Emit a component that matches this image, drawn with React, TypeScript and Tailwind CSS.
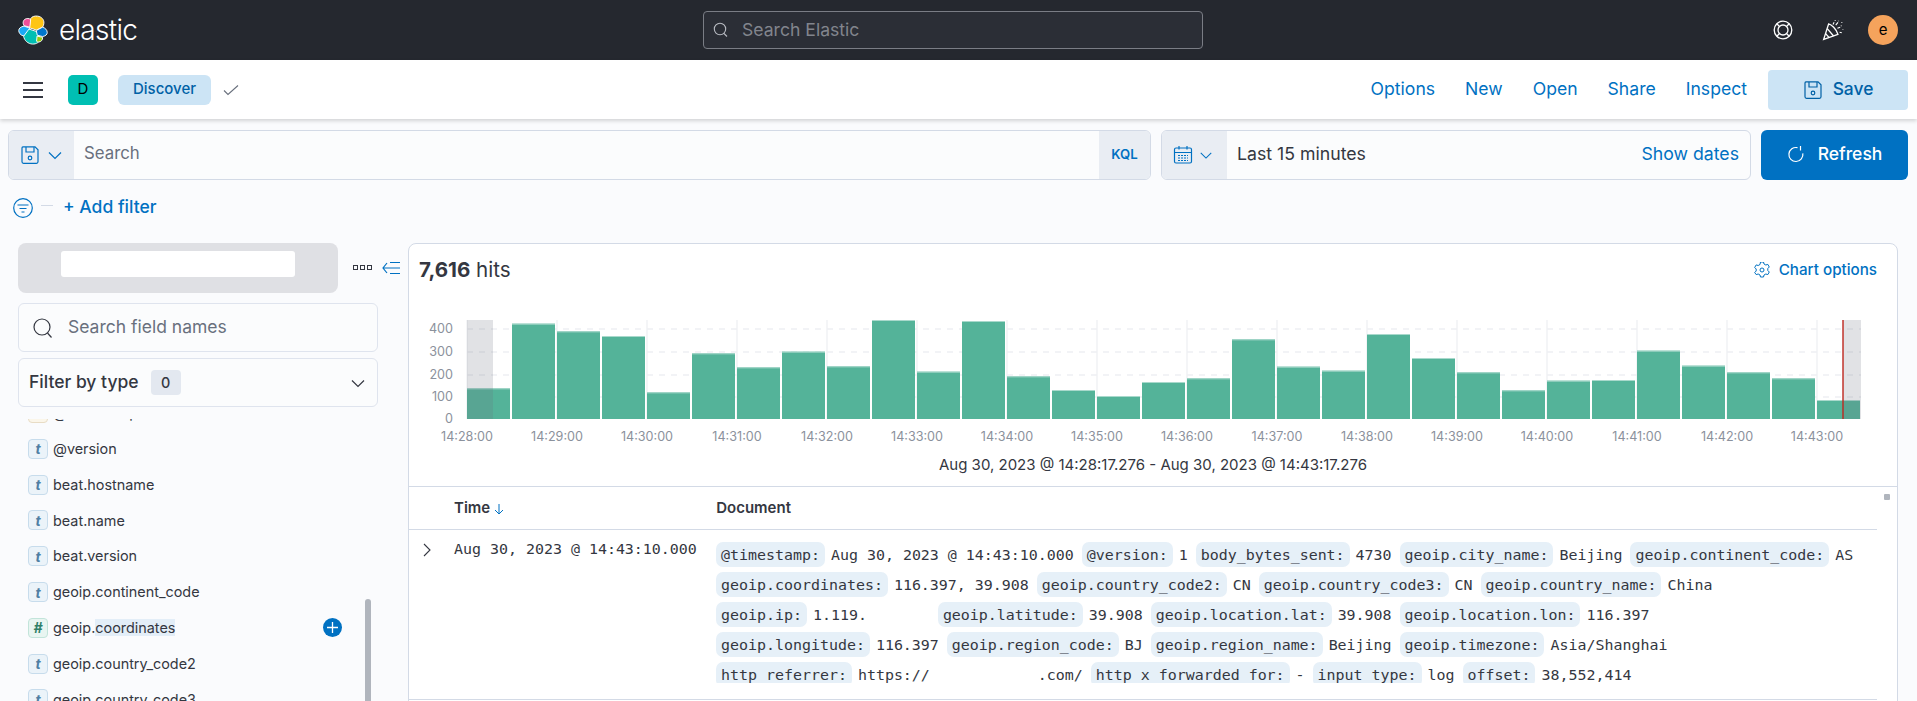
const INTER = "font-['Inter',sans-serif]";

const bars = [
  445, 251, 274, 288, 457, 340, 382, 335, 379, 240, 395, 243, 409, 450, 468, 426,
  415, 298, 380, 392, 282, 354, 397, 451, 422, 420, 332, 377, 397, 415, 480,
];

const fields = [
  { name: '@version', type: 't' },
  { name: 'beat.hostname', type: 't' },
  { name: 'beat.name', type: 't' },
  { name: 'beat.version', type: 't' },
  { name: 'geoip.continent_code', type: 't' },
  { name: 'geoip.coordinates', type: '#' },
  { name: 'geoip.country_code2', type: 't' },
  { name: 'geoip.country_code3', type: 't' },
];

const docRows: [string, string][][] = [
  [
    ['@timestamp:', 'Aug 30, 2023 @ 14:43:10.000'],
    ['@version:', '1'],
    ['body_bytes_sent:', '4730'],
    ['geoip.city_name:', 'Beijing'],
    ['geoip.continent_code:', 'AS'],
  ],
  [
    ['geoip.coordinates:', '116.397, 39.908'],
    ['geoip.country_code2:', 'CN'],
    ['geoip.country_code3:', 'CN'],
    ['geoip.country_name:', 'China'],
  ],
  [
    ['geoip.ip:', '1.119.       '],
    ['geoip.latitude:', '39.908'],
    ['geoip.location.lat:', '39.908'],
    ['geoip.location.lon:', '116.397'],
  ],
  [
    ['geoip.longitude:', '116.397'],
    ['geoip.region_code:', 'BJ'],
    ['geoip.region_name:', 'Beijing'],
    ['geoip.timezone:', 'Asia/Shanghai'],
  ],
  [
    ['http_referrer:', 'https://            .com/'],
    ['http_x_forwarded_for:', '-'],
    ['input_type:', 'log'],
    ['offset:', '38,552,414'],
  ],
];

const ElasticLogo = () => (
  <svg width="30" height="30" viewBox="0 0 32 32">
    <path d="M12 13.5 13.5 3.8C15 1.5 18 .8 21 1.2c4 .6 7 3.6 6.6 7.6-.1 1.5-.6 3-1.4 4.3L19.5 16z" fill="#fec514" stroke="#fff" strokeWidth="1" />
    <path d="M12.6 13 6.6 11.5C5 9.5 5 6 7.5 4.5c1.8-1.1 4.2-1 6 .2z" fill="#f04e98" stroke="#fff" strokeWidth="1" />
    <path d="M6.4 11.8 12.5 14l-1.5 7.2-5.6 1C2.3 21.3.8 18.8.8 16.5c0-2.1 2-4 5.6-4.7z" fill="#1ba9f5" stroke="#fff" strokeWidth="1" />
    <path d="M11.7 15 19.5 17.5l4.8 7.5C23 29 19.5 31.2 15.5 31c-5-.3-8.7-3.7-9.5-8.3z" fill="#00bfb3" stroke="#fff" strokeWidth="1" />
    <path d="M26.2 13c2.8.8 5 3 5 5.7 0 2-1.5 3.6-5 4.3l-5.7-1.5-1-5z" fill="#07c" stroke="#fff" strokeWidth="1" />
    <path d="M20.3 22.5l5.9 1.3c.3 2.7-1.5 5-4.2 5-1 0-1.6-.4-2.2-.8z" fill="#93c90e" stroke="#fff" strokeWidth="1" />
  </svg>
);

const SaveIcon = ({ className = '' }: { className?: string }) => (
  <svg width="20" height="20" viewBox="0 0 20 20" fill="none" stroke="currentColor" strokeWidth="1.2" className={className}>
    <path d="M3 1.8h12l3 3v12a1.5 1.5 0 0 1-1.5 1.5h-13A1.5 1.5 0 0 1 2 16.8V3a1.2 1.2 0 0 1 1-1.2z" />
    <path d="M6 2v5h8V2" />
    <circle cx="10" cy="13" r="1.8" />
  </svg>
);

const Chevron = ({ size = 16, className = '' }: { size?: number; className?: string }) => (
  <svg width={size} height={size} viewBox="0 0 16 16" fill="none" stroke="currentColor" strokeWidth="1.2" className={className}>
    <path d="M2 5.5l6 6 6-6" />
  </svg>
);

const HistogramChart = () => {
  const left = 58;
  const ticks = Array.from({ length: 16 }, (_, i) => i);
  return (
    <svg width="1468" height="130" viewBox="0 0 1468 130" className="block">
      {ticks.map((i) => (
        <line key={i} x1={left + i * 90} x2={left + i * 90} y1={0} y2={99} stroke="#f1f2f5" strokeWidth="1.5" />
      ))}
      {[9, 32, 55, 77].map((y) => (
        <line key={y} x1={left} x2={1452} y1={y} y2={y} stroke="#eef0f3" strokeWidth="1.5" strokeDasharray="6 6" />
      ))}
      {bars.map((b, i) => {
        const y = b / 3 - 80;
        return (
          <g key={i}>
            <rect x={left + i * 45} y={y} width={43} height={99 - y} fill="#54b399" />
            <rect x={left + i * 45} y={y} width={43} height={1} fill="#a9d9cc" />
          </g>
        );
      })}
      <rect x={left} y={0} width={26} height={99} fill="#69707d" fillOpacity="0.2" />
      <rect x={1434} y={0} width={18} height={99} fill="#69707d" fillOpacity="0.2" />
      <rect x={1433} y={0} width={2} height={99} fill="#bd271e" fillOpacity="0.7" />
      {[
        ['400', 9],
        ['300', 32],
        ['200', 55],
        ['100', 77],
        ['0', 99],
      ].map(([t, y]) => (
        <text key={t} x={44} y={Number(y) + 4} textAnchor="end" fontSize="12.6" fontFamily="Inter" fill="#8b919c">
          {t}
        </text>
      ))}
      {ticks.map((i) => (
        <text key={i} x={left + i * 90} y={121} textAnchor="middle" fontSize="12.6" fontFamily="Inter" fill="#8b919c">
          {`14:${28 + i}:00`}
        </text>
      ))}
    </svg>
  );
};

export default function App() {
  return (
    <div className={`${INTER} h-[701px] w-[1917px] overflow-hidden bg-[#fafbfd] text-[14.4px] text-[#343741]`}>
      {/* top dark bar */}
      <header className="relative flex h-[60px] items-center bg-[#25282f] pl-[18px] pr-[19px]">
        <ElasticLogo />
        <span className="ml-[11px] text-[28px] font-light tracking-tight text-white">elastic</span>
        <div className="absolute left-[703px] top-[11px] flex h-[38px] w-[500px] items-center gap-[13px] rounded-[4px] border border-[#7a7d85] bg-[#2b2e36] px-[9px]">
          <svg width="16" height="16" viewBox="0 0 16 16" fill="none" stroke="#b8bbc2" strokeWidth="1.1">
            <circle cx="7" cy="7" r="5.7" />
            <path d="M11 11.5l3 3" />
          </svg>
          <span className="text-[17.6px] text-[#82858d]">Search Elastic</span>
        </div>
        <div className="ml-auto flex items-center">
          <svg width="20" height="20" viewBox="0 0 20 20" fill="none" stroke="#fff" strokeWidth="1.3">
            <circle cx="10" cy="10" r="8.8" />
            <circle cx="10" cy="10" r="5" />
            <path d="M3.8 3.8l2.7 2.7M16.2 3.8l-2.7 2.7M3.8 16.2l2.7-2.7M16.2 16.2l-2.7-2.7" />
          </svg>
          <svg width="22" height="22" viewBox="0 0 20 20" fill="none" stroke="#fff" strokeWidth="1.2" className="ml-[29px]">
            <path d="M1.5 18.5 6 4.5c2.5.5 7 4.5 8.5 9.5z" />
            <path d="M4.8 8.8l5.7 6.7M3.3 13.3l3.3 3.7" />
            <path d="M10 5l1-2M14 8.5l2.5-1M12.5 5.5l2-2.5M16 12l2 .5" strokeWidth="1" />
            <path d="M15 1.5v.6M18 3v.6M17.5 6v.6M19 9v.6M12 1v.6" strokeWidth="1.1" />
          </svg>
          <div className="ml-[24px] flex h-[30px] w-[30px] items-center justify-center rounded-full bg-[#f5a35c] text-[15px] text-black">
            e
          </div>
        </div>
      </header>

      {/* app bar */}
      <div className="relative z-10 flex h-[59px] items-center bg-white pl-[23px] pr-[9px] shadow-[0_2px_4px_rgba(0,0,0,0.16)]">
        <div className="flex w-[20px] flex-col gap-[5px]">
          <span className="h-[2px] bg-[#343741]" />
          <span className="h-[2px] bg-[#343741]" />
          <span className="h-[2px] bg-[#343741]" />
        </div>
        <div className="ml-[25px] flex h-[30px] w-[30px] items-center justify-center rounded-[5px] bg-[#00bfb3] text-[15px] text-black">
          D
        </div>
        <div className="ml-[20px] flex h-[30px] w-[93px] items-center justify-center rounded-[6px] bg-[#cce4f5] text-[15px] font-medium text-[#0061a6]">
          Discover
        </div>
        <svg width="16" height="16" viewBox="0 0 16 16" fill="none" stroke="#69707d" strokeWidth="1.1" className="ml-[12px]">
          <path d="M1 8.5l4 4 10-9" />
        </svg>
        <nav className="ml-auto flex items-center text-[17.6px] text-[#0071c2]">
          <span>Options</span>
          <span className="ml-[30px]">New</span>
          <span className="ml-[30px]">Open</span>
          <span className="ml-[30px]">Share</span>
          <span className="ml-[30px]">Inspect</span>
        </nav>
        <button className="ml-[21px] flex h-[40px] w-[140px] items-center justify-center gap-[10px] rounded-[4px] bg-[#cce4f5] text-[17.4px] font-medium text-[#0061a6]">
          <SaveIcon />
          Save
        </button>
      </div>

      {/* query row */}
      <div className="mt-[11px] flex h-[50px] gap-[10px] pl-[8px] pr-[9px]">
        <div className="flex w-[1143px] overflow-hidden rounded-[6px] border border-[#d3dae6] bg-[#fbfcfd]">
          <div className="flex w-[65px] items-center gap-[7px] bg-[#e9edf3] pl-[11px] text-[#0071c2]">
            <SaveIcon />
            <Chevron />
          </div>
          <span className="mb-[2px] ml-[10px] self-center text-[16.8px] text-[#69707d]">Search</span>
          <span className="ml-auto flex w-[51px] items-center justify-center bg-[#e9edf3] text-[13.2px] font-semibold text-[#0071c2]">KQL</span>
        </div>
        <div className="flex w-[590px] overflow-hidden rounded-[6px] border border-[#d3dae6] bg-[#fbfcfd]">
          <div className="flex w-[65px] items-center gap-[6px] bg-[#e9edf3] pl-[11px] text-[#0071c2]">
            <svg width="20" height="20" viewBox="0 0 20 20" fill="none" stroke="currentColor" strokeWidth="1.2">
              <rect x="1.5" y="3" width="17" height="15" rx="1.5" />
              <path d="M1.5 7.5h17M6 1v3.5M14 1v3.5" />
              <path d="M5 10.5h10M5 13h10M5 15.5h10" strokeDasharray="2 1" />
            </svg>
            <Chevron size={14} />
          </div>
          <span className="mb-[2px] ml-[10px] self-center text-[17.7px]">Last 15 minutes</span>
          <span className="mb-[2px] ml-auto self-center pr-[11px] text-[17.7px] text-[#0071c2]">Show dates</span>
        </div>
        <button className="flex flex-1 items-center justify-center gap-[13px] rounded-[6px] bg-[#0071c2] pb-[2px] text-[17.5px] font-medium text-white">
          <svg width="18" height="18" viewBox="0 0 18 18" fill="none" stroke="#fff" strokeWidth="1.2">
            <path d="M10.5 2.7a7 7 0 1 0 5.3 5.6" />
            <path d="M13.5 1v4.5" />
          </svg>
          Refresh
        </button>
      </div>

      {/* filter row */}
      <div className="mt-[16px] flex h-[24px] items-center pl-[13px] text-[#0071c2]">
        <svg width="20" height="20" viewBox="0 0 20 20" fill="none" stroke="currentColor" strokeWidth="1.2">
          <circle cx="10" cy="10" r="9.3" />
          <path d="M4.5 7h11M6.5 10.5h7M8.5 14h3" />
        </svg>
        <span className="ml-[8px] h-[1px] w-[12px] -translate-y-[3px] bg-[#d3dae6]" />
        <span className="mb-[2px] ml-[10px] text-[17.5px] font-medium">+ Add filter</span>
      </div>

      {/* body */}
      <div className="mt-[23px] flex h-[458px] overflow-hidden">
        {/* sidebar */}
        <aside className="relative w-[408px] shrink-0 overflow-hidden pl-[18px]">
          <div className="flex items-start">
            <div className="flex h-[50px] w-[320px] justify-center rounded-[8px] bg-[#dfe0e4] pt-[8px]">
              <div className="h-[26px] w-[234px] rounded-[3px] bg-white" />
            </div>
            <div className="ml-[15px] mt-[22px] flex gap-[2px]">
              <span className="h-[5px] w-[5px] border border-[#343741]" />
              <span className="h-[5px] w-[5px] border border-[#343741]" />
              <span className="h-[5px] w-[5px] border border-[#343741]" />
            </div>
            <svg width="19" height="14" viewBox="0 0 19 14" fill="none" stroke="#0071c2" strokeWidth="1.2" className="ml-[10px] mt-[18px]">
              <path d="M5 2 1 7l4 5M1 7h17M8 1.5h10M8 12.5h10" />
            </svg>
          </div>
          <div className="mt-[10px] flex h-[49px] w-[360px] items-center rounded-[6px] border border-[#dfe4ee] bg-[#fbfcfd] pl-[14px]">
            <svg width="20" height="20" viewBox="0 0 20 20" fill="none" stroke="#343741" strokeWidth="1.2">
              <circle cx="9" cy="9" r="8" />
              <path d="M14.5 15l4 4.5" />
            </svg>
            <span className="ml-[15px] text-[17.5px] text-[#69707d]">Search field names</span>
          </div>
          <div className="mt-[6px] flex h-[49px] w-[360px] items-center rounded-[6px] border border-[#dfe4ee] bg-[#fbfcfd] pl-[10px] pr-[11px]">
            <span className="text-[17.5px] font-medium">Filter by type</span>
            <span className="ml-[12px] flex h-[25px] w-[30px] items-center justify-center rounded-[4px] bg-[#e3e8f0] text-[14.4px] font-medium">0</span>
            <Chevron className="ml-auto" />
          </div>
          <div className="relative mt-[12px] h-[289px] overflow-hidden pl-[10px]">
            <div className="-mt-[24px] flex h-[36px] items-center">
              <span className="h-[20px] w-[20px] rounded-[4px] border border-[#e8dcc5] bg-[#fbf6ea]" />
              <span className="ml-[5px] text-[14.4px] text-[#343741]">@timestamp</span>
            </div>
            {fields.map((f) => (
              <div key={f.name} className="flex h-[35.8px] items-center">
                <span
                  className={
                    f.type === 't'
                      ? 'flex h-[20px] w-[20px] items-center justify-center rounded-[4px] border border-[#c7dcec] bg-[#ebf3f9] text-[14px] font-bold italic text-[#4f7fa3]'
                      : 'flex h-[20px] w-[20px] items-center justify-center rounded-[4px] border border-[#c2e4da] bg-[#e8f5f1] text-[14px] font-bold italic text-[#2f7f68]'
                  }
                >
                  {f.type}
                </span>
                <span className="ml-[5px] text-[14.4px] text-[#343741]">
                  {f.name === 'geoip.coordinates' ? (
                    <>
                      geoip.<span className="bg-[#e3eef8]">coordinates</span>
                    </>
                  ) : (
                    f.name
                  )}
                </span>
                {f.name === 'geoip.coordinates' && (
                  <span className="absolute left-[305px] flex h-[19px] w-[19px] items-center justify-center rounded-full bg-[#0071c2]">
                    <svg width="11" height="11" viewBox="0 0 11 11" stroke="#fff" strokeWidth="1.3">
                      <path d="M5.5 0v11M0 5.5h11" />
                    </svg>
                  </span>
                )}
              </div>
            ))}
            <span className="absolute left-[347px] top-[180px] h-[120px] w-[6px] rounded-full bg-[#b0b5bd]" />
          </div>
        </aside>

        {/* main panel */}
        <main className="relative h-[470px] w-[1490px] shrink-0 rounded-tl-[8px] rounded-tr-[8px] border border-[#d3dae6] bg-white">
          <div className="flex h-[243px] flex-col border-b border-[#d3dae6]">
            <div className="flex h-[52px] items-center pl-[10px] pr-[20px]">
              <span className="text-[20.6px]">
                <span className="font-bold">7,616</span> hits
              </span>
              <span className="ml-auto flex items-center gap-[9px] text-[15.2px] font-medium text-[#0071c2]">
                <svg width="16" height="16" viewBox="0 0 16 16" fill="none" stroke="currentColor" strokeWidth="1">
                  <path d="M6.5 1h3l.5 2 1.8 1 2-.6 1.5 2.6-1.5 1.5v2l1.5 1.5-1.5 2.6-2-.6-1.8 1-.5 2h-3l-.5-2-1.8-1-2 .6L.7 11.5 2.2 10V8L.7 6.5l1.5-2.6 2 .6 1.8-1z" transform="translate(0 -1)" />
                  <circle cx="8" cy="8" r="2" />
                </svg>
                Chart options
              </span>
            </div>
            <div className="mt-[24px]">
              <HistogramChart />
            </div>
            <div className="mt-[4px] text-center text-[15px]">
              Aug 30, 2023 @ 14:28:17.276 - Aug 30, 2023 @ 14:43:17.276
            </div>
          </div>

          <div className="flex h-[43px] w-[1468px] items-center border-b border-[#d3dae6] pt-[1px] text-[15px] font-semibold">
            <span className="ml-[45px] flex items-center gap-[3px]">
              Time
              <svg width="12" height="12" viewBox="0 0 12 12" fill="none" stroke="#0071c2" strokeWidth="1">
                <path d="M6 1v10M2 7l4 4 4-4" />
              </svg>
            </span>
            <span className="ml-[211px]">Document</span>
          </div>

          <div className="flex h-[170px] w-[1468px] border-b border-[#d3dae6]">
            <svg width="10" height="14" viewBox="0 0 10 14" fill="none" stroke="#343741" strokeWidth="1.1" className="ml-[13px] mt-[13px]">
              <path d="M2 1l6 6-6 6" />
            </svg>
            <div className="ml-[22px] mt-[9px] w-[262px] font-['DejaVu_Sans_Mono',monospace] text-[14.95px] leading-[20px]">
              Aug 30, 2023 @ 14:43:10.000
            </div>
            <div className="mt-[12px] h-[141px] flex-1 overflow-hidden font-['DejaVu_Sans_Mono',monospace] text-[14.95px]">
              {docRows.map((row, r) => (
                <div key={r} className="flex h-[30px] items-start">
                  {row.map(([k, v]) => (
                    <div key={k} className="mr-[8px] flex items-center">
                      <span className="flex h-[25px] items-center rounded-[7px] bg-[#e6f0f8] px-[5px] pt-[1px]">{k}</span>
                      <span className="ml-[6px] whitespace-pre pt-[1px]">{v}</span>
                    </div>
                  ))}
                </div>
              ))}
            </div>
          </div>

          {/* table scrollbar stub */}
          <span className="absolute left-[1475px] top-[250px] h-[6px] w-[6px] rounded-[1px] bg-[#b0b5bd]" />
        </main>
      </div>
    </div>
  );
}
